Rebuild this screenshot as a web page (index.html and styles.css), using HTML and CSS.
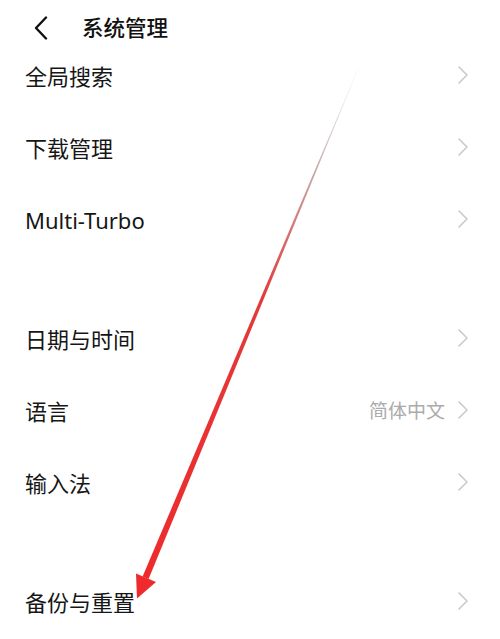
FILE: index.html
```html
<!DOCTYPE html>
<html lang="zh-CN">
<head>
<meta charset="utf-8">
<title>系统管理</title>
<link rel="stylesheet" href="styles.css">
</head>
<body>
<div class="screen">
  <header class="topbar">
    <svg class="back" width="16" height="24" viewBox="0 0 16 24"><path d="M13 1.5 L3 12 L13 22.5" fill="none" stroke="#111" stroke-width="2.4" stroke-linecap="round" stroke-linejoin="round"/></svg>
    <h1 class="title">系统管理</h1>
  </header>
  <div class="group">
    <div class="row"><span class="label">全局搜索</span><span class="right"><svg class="chev" width="12" height="18" viewBox="0 0 12 18"><path d="M2 1 L10 9 L2 17" fill="none" stroke="#c9c9c9" stroke-width="1.6" stroke-linecap="round" stroke-linejoin="round"/></svg></span></div>
    <div class="row"><span class="label">下载管理</span><span class="right"><svg class="chev" width="12" height="18" viewBox="0 0 12 18"><path d="M2 1 L10 9 L2 17" fill="none" stroke="#c9c9c9" stroke-width="1.6" stroke-linecap="round" stroke-linejoin="round"/></svg></span></div>
    <div class="row"><span class="label">Multi-Turbo</span><span class="right"><svg class="chev" width="12" height="18" viewBox="0 0 12 18"><path d="M2 1 L10 9 L2 17" fill="none" stroke="#c9c9c9" stroke-width="1.6" stroke-linecap="round" stroke-linejoin="round"/></svg></span></div>
  </div>
  <div class="group">
    <div class="row"><span class="label">日期与时间</span><span class="right"><svg class="chev" width="12" height="18" viewBox="0 0 12 18"><path d="M2 1 L10 9 L2 17" fill="none" stroke="#c9c9c9" stroke-width="1.6" stroke-linecap="round" stroke-linejoin="round"/></svg></span></div>
    <div class="row"><span class="label">语言</span><span class="right"><span class="value">简体中文</span><svg class="chev" width="12" height="18" viewBox="0 0 12 18"><path d="M2 1 L10 9 L2 17" fill="none" stroke="#c9c9c9" stroke-width="1.6" stroke-linecap="round" stroke-linejoin="round"/></svg></span></div>
    <div class="row"><span class="label">输入法</span><span class="right"><svg class="chev" width="12" height="18" viewBox="0 0 12 18"><path d="M2 1 L10 9 L2 17" fill="none" stroke="#c9c9c9" stroke-width="1.6" stroke-linecap="round" stroke-linejoin="round"/></svg></span></div>
  </div>
  <div class="group">
    <div class="row"><span class="label">备份与重置</span><span class="right"><svg class="chev" width="12" height="18" viewBox="0 0 12 18"><path d="M2 1 L10 9 L2 17" fill="none" stroke="#c9c9c9" stroke-width="1.6" stroke-linecap="round" stroke-linejoin="round"/></svg></span></div>
  </div>
  <svg class="arrow" width="500" height="639" viewBox="0 0 500 639">
    <defs>
      <linearGradient id="ag" x1="358" y1="68" x2="145" y2="578" gradientUnits="userSpaceOnUse">
        <stop offset="0" stop-color="#eeeeee" stop-opacity="0.5"/>
        <stop offset="0.2" stop-color="#c8a8a8"/>
        <stop offset="0.45" stop-color="#e23a3a"/>
        <stop offset="1" stop-color="#ee2a2c"/>
      </linearGradient>
    </defs>
    <polygon points="358.2,68 358.6,68.2 148.6,579 142.6,576.5" fill="url(#ag)"/>
    <polygon points="137,598.5 136,573.5 156,582" fill="#ee2a2c"/>
  </svg>
</div>
</body>
</html>
```
FILE: styles.css
```css
html, body {
  margin: 0;
  padding: 0;
  background: #ffffff;
}
body {
  font-family: "Noto Sans", "Noto Sans CJK SC", sans-serif;
  color: #111111;
}
.screen {
  position: relative;
  width: 500px;
  height: 639px;
  overflow: hidden;
  background: #ffffff;
}
.topbar {
  display: flex;
  align-items: center;
  height: 24px;
  padding-top: 16px;
  padding-left: 33px;
}
.back {
  display: block;
  flex: none;
}
.title {
  margin: 0 0 0 33px;
  font-size: 21.5px;
  font-weight: 500;
  line-height: 24px;
  color: #111;
}
.group {
  display: flex;
  flex-direction: column;
}
.group + .group {
  margin-top: 47px;
}
.row {
  display: flex;
  align-items: center;
  justify-content: space-between;
  height: 72px;
  padding: 0 31px 0 25px;
}
.label {
  font-size: 22px;
  line-height: 24px;
  color: #161616;
}
.right {
  display: flex;
  align-items: center;
  gap: 12px;
}
.value {
  font-size: 19px;
  line-height: 22px;
  color: #ababab;
}
.chev {
  display: block;
  margin-top: -3px;
}
.arrow {
  position: absolute;
  left: 0;
  top: 0;
  pointer-events: none;
}
```
